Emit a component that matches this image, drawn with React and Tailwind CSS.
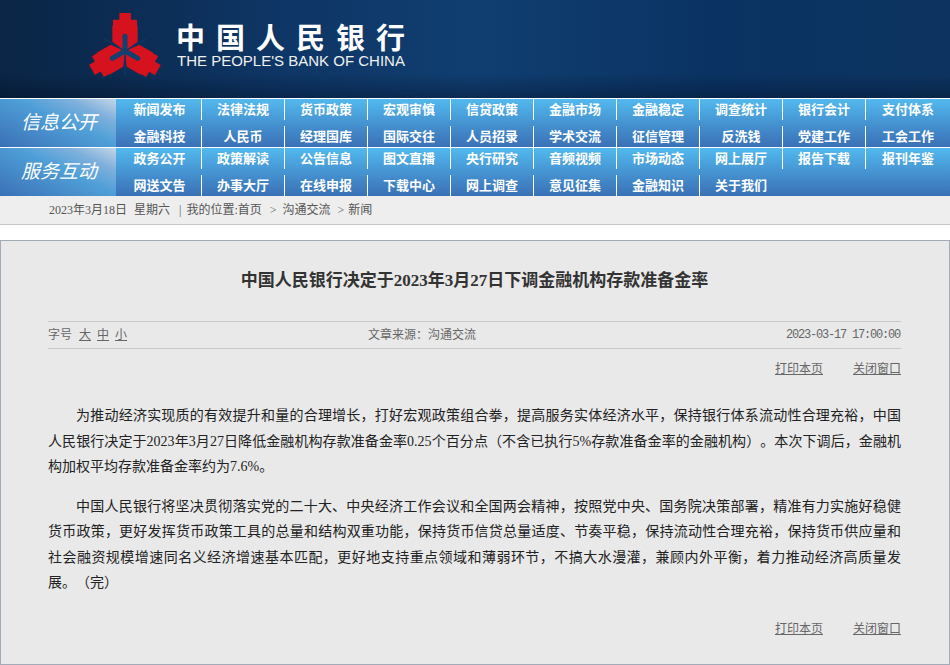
import React from "react";

const navRows = [
  {
    label: "信息公开",
    top: ["新闻发布", "法律法规", "货币政策", "宏观审慎", "信贷政策", "金融市场", "金融稳定", "调查统计", "银行会计", "支付体系"],
    bottom: ["金融科技", "人民币", "经理国库", "国际交往", "人员招录", "学术交流", "征信管理", "反洗钱", "党建工作", "工会工作"],
  },
  {
    label: "服务互动",
    top: ["政务公开", "政策解读", "公告信息", "图文直播", "央行研究", "音频视频", "市场动态", "网上展厅", "报告下载", "报刊年鉴"],
    bottom: ["网送文告", "办事大厅", "在线申报", "下载中心", "网上调查", "意见征集", "金融知识", "关于我们"],
  },
];

function Emblem() {
  // one stepped arm, turned three times round the middle
  const arm = "M118 24H153V44H171V62H173V110L135 138L97 110V62H99V44H118Z";
  return (
    <svg viewBox="0 0 270 225" className="h-[75px] w-[90px] shrink-0">
      {[0, 120, 240].map((deg) => (
        <g key={deg} transform={`rotate(${deg} 135 138)`}>
          <path d={arm} fill="#d5121d" />
        </g>
      ))}
      {[0, 120, 240].map((deg) => (
        <g key={deg} transform={`rotate(${deg} 135 138)`}>
          <path d="M135 94V138" stroke="#12406f" strokeWidth="15" strokeLinecap="round" />
          <path d="M135 138V212" stroke="#0e3a6b" strokeWidth="3" />
        </g>
      ))}
    </svg>
  );
}

function NavCell({ text, first }) {
  return (
    <a className={`flex h-[21px] items-center justify-center text-[13px] font-bold text-white ${first ? "pl-[2px]" : "border-l border-white"}`}>
      {text}
    </a>
  );
}

function NavRow({ row }) {
  return (
    <div className="flex h-[48px] bg-gradient-to-b from-[#52b9ee] to-[#3a70b6]">
      <div className="flex w-[116px] items-center justify-center pl-[2px] bg-[linear-gradient(205deg,#c4d6e8_0%,#7eb0dc_22%,#4f9fd8_45%,#3a70b6_100%)]">
        <span className="text-[19px] italic text-white">{row.label}</span>
      </div>
      <div className="grid w-[834px] grid-cols-[85px_repeat(8,83px)_85px] grid-rows-[21px_21px] gap-y-[6px]">
        {row.top.map((text, i) => (
          <NavCell key={text} text={text} first={i === 0} />
        ))}
        {row.bottom.map((text, i) => (
          <NavCell key={text} text={text} first={i === 0} />
        ))}
      </div>
    </div>
  );
}

function PrintLinks() {
  return (
    <div className="flex justify-end gap-[30px] text-xs text-[#666] underline">
      <a>打印本页</a>
      <a>关闭窗口</a>
    </div>
  );
}

export default function App() {
  return (
    <div className="h-[665px] w-[950px] overflow-hidden bg-white font-['Liberation_Serif','Noto_Sans_CJK_SC',sans-serif]">
      {/* Header */}
      <header className="flex h-[98px] items-start bg-[linear-gradient(180deg,transparent_75%,rgba(0,10,30,0.35)_100%),linear-gradient(90deg,#0a2545_0%,#0e3666_30%,#103e70_50%,#0a3363_75%,#0d3460_100%)] pl-[80px] pt-[5px]">
        <Emblem />
        <div className="ml-[5px] flex flex-col pt-[16px]">
          <div className="pl-[1px] font-['Noto_Sans_CJK_SC',sans-serif] text-[29px] font-bold leading-[30px] tracking-[11px] text-white">
            中国人民银行
          </div>
          <div className="whitespace-nowrap pl-[2px] font-['Liberation_Sans',sans-serif] text-[15px] leading-[20px] text-[#f0f0f0]">
            THE PEOPLE'S BANK OF CHINA
          </div>
        </div>
      </header>

      {/* Nav */}
      <nav className="flex flex-col gap-[1px] bg-white pt-[1px]">
        {navRows.map((row) => (
          <NavRow key={row.label} row={row} />
        ))}
      </nav>

      {/* Breadcrumb */}
      <div className="flex h-[29px] items-center gap-[4px] border-b border-[#c8c8c8] bg-[#eeeeee] pl-[49px] text-xs text-[#555]">
        <span>2023年3月18日</span>
        <span className="ml-[3px]">星期六</span>
        <span className="ml-[5px]">|</span>
        <span className="ml-[1px]">我的位置:首页</span>
        <span className="ml-[4px]">&gt;</span>
        <span className="ml-[2px]">沟通交流</span>
        <span className="ml-[3px]">&gt;</span>
        <span>新闻</span>
      </div>

      {/* Article */}
      <main className="mt-[15px] h-[425px] border border-[#a3abb8] bg-[#e9e9e9] pl-[47px] pr-[48px]">
        <h1 className="pt-[28px] text-center text-[17px] font-bold leading-[24px] text-[#333]">
          中国人民银行决定于2023年3月27日下调金融机构存款准备金率
        </h1>

        <div className="mt-[28px] flex h-[28px] items-center border-y border-[#c8c8c8] text-xs text-[#666]">
          <div className="flex w-[320px] gap-[6px]">
            <span className="mr-[1px]">字号</span>
            <a className="underline">大</a>
            <a className="underline">中</a>
            <a className="underline">小</a>
          </div>
          <span>文章来源：沟通交流</span>
          <span className="ml-auto pr-[1px] font-['Liberation_Mono',monospace] tracking-[-1.2px]">2023-03-17 17:00:00</span>
        </div>

        <div className="mt-[12px]">
          <PrintLinks />
        </div>

        <div className="mt-[26px] space-y-[14px] text-justify text-sm leading-[25.5px] text-[#222] [text-spacing-trim:space-all]">
          <p className="indent-[28px]">
            为推动经济实现质的有效提升和量的合理增长，打好宏观政策组合拳，提高服务实体经济水平，保持银行体系流动性合理充裕，中国人民银行决定于2023年3月27日降低金融机构存款准备金率0.25个百分点（不含已执行5%存款准备金率的金融机构）。本次下调后，金融机构加权平均存款准备金率约为7.6%。
          </p>
          <p className="indent-[28px]">
            中国人民银行将坚决贯彻落实党的二十大、中央经济工作会议和全国两会精神，按照党中央、国务院决策部署，精准有力实施好稳健货币政策，更好发挥货币政策工具的总量和结构双重功能，保持货币信贷总量适度、节奏平稳，保持流动性合理充裕，保持货币供应量和社会融资规模增速同名义经济增速基本匹配，更好地支持重点领域和薄弱环节，不搞大水漫灌，兼顾内外平衡，着力推动经济高质量发展。（完）
          </p>
        </div>

        <div className="mt-[25px]">
          <PrintLinks />
        </div>
      </main>
    </div>
  );
}
